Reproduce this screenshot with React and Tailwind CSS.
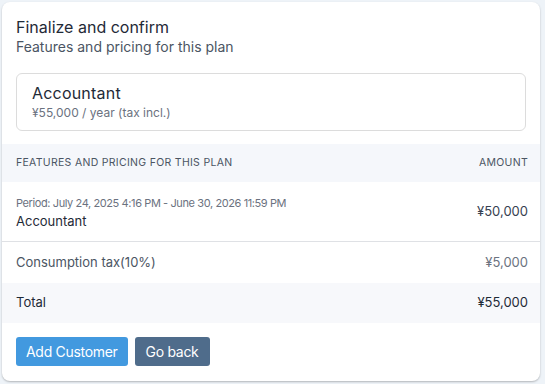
import React from 'react';

const rows = [
    { period: 'Period: July 24, 2025 4:16 PM - June 30, 2026 11:59 PM', name: 'Accountant', amount: '¥50,000' },
];

const App = () => {
    return (
        <div className="w-[545px] h-[384px] bg-[#eef3f8] p-[2px] pr-[5px] pb-[3px] font-['Inter',sans-serif] text-[#1f2937]">
            <div className="h-full bg-white rounded-lg shadow-[0_1px_2px_rgba(0,0,0,0.25)] flex flex-col">
                <div className="px-[14px] pt-[15px]">
                    <h2 className="text-[16px] leading-[20px] text-[#1f2a37]">Finalize and confirm</h2>
                    <p className="text-[14px] leading-[20px] text-[#4b5563]">Features and pricing for this plan</p>
                    <div className="mt-[16px] border border-[#dcdcdc] rounded-[6px] px-[15px] pt-[9px] pb-[9px]">
                        <div className="text-[16px] leading-[20px] text-[#1f2a37] tracking-[0.2px]">Accountant</div>
                        <div className="text-[12px] leading-[16px] text-[#6b7280] mt-[2px]">¥55,000 / year (tax incl.)</div>
                    </div>
                </div>

                <div className="mt-[13px]">
                    <div className="flex justify-between items-center bg-[#f5f7fb] h-[38px] pl-[14px] pr-[12px] text-[10.5px] text-[#4b5563] uppercase tracking-[0.3px]">
                        <span>Features and pricing for this plan</span>
                        <span>Amount</span>
                    </div>
                    {rows.map((r, i) => (
                        <div key={i} className="flex justify-between items-center h-[60px] pl-[14px] pr-[12px] border-b border-[#dfe1e5]">
                            <div className="pt-[3px]">
                                <div className="text-[11px] leading-[14px] text-[#6b7280] tracking-[-0.4px]">{r.period}</div>
                                <div className="text-[13px] leading-[20px] text-[#1f2a37] mt-[1px]">{r.name}</div>
                            </div>
                            <span className="text-[13px] text-[#374151]">{r.amount}</span>
                        </div>
                    ))}
                    <div className="flex justify-between items-center h-[41px] pl-[14px] pr-[12px] text-[13px] text-[#4b5563]">
                        <span>Consumption tax(10%)</span>
                        <span className="text-[#6b7280]">¥5,000</span>
                    </div>
                    <div className="flex justify-between items-center h-[40px] pl-[14px] pr-[12px] bg-[#f7f8fb] text-[13px] text-[#1f2a37]">
                        <span>Total</span>
                        <span>¥55,000</span>
                    </div>
                </div>

                <div className="flex gap-[7px] px-[14px] pt-[14px]">
                    <button className="h-[29px] px-[10px] rounded-[3px] bg-[#4299df] text-white text-[14px] tracking-[-0.3px]">Add Customer</button>
                    <button className="h-[29px] px-[11px] rounded-[3px] bg-[#4f6c8b] text-white text-[14px] tracking-[-0.3px]">Go back</button>
                </div>
            </div>
        </div>
    );
};

export default App;
